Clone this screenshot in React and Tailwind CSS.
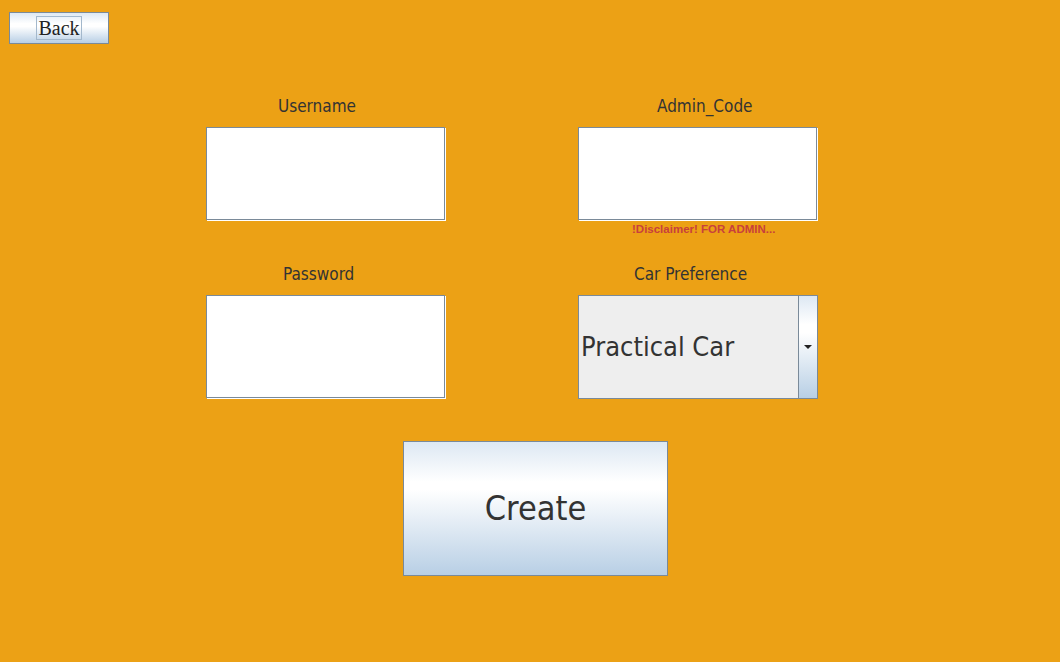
import React from 'react';

const fieldCls =
  'bg-white border border-[#7a8a99] shadow-[1px_1px_0_0_#ffffff] mr-[1px]';

const Label = ({ text, pad }) => (
  <div className={`h-[20px] leading-[20px] text-[17px] text-[#333333] ${pad}`}>{text}</div>
);

export default function App() {
  return (
    <div className="w-[1060px] h-[662px] bg-[#eca115] overflow-hidden" style={{ fontFamily: '"DejaVu Sans Condensed", "DejaVu Sans", sans-serif', fontStretch: 'condensed' }}>
      {/* Back */}
      <div className="pt-[12px] pl-[9px]">
        <button className="w-[100px] h-[32px] border border-[#7a8a99] bg-[linear-gradient(to_bottom,#dde8f3_0%,#ffffff_35%,#ffffff_45%,#b8cfe5_100%)] flex items-center justify-center">
          <span className="border border-[#a3b8cc] px-[1px] leading-[22px] text-[20px] text-[#222]" style={{ fontFamily: '"Liberation Serif", serif', fontStretch: 'normal' }}>
            Back
          </span>
        </button>
      </div>

      <div className="ml-[206px] mt-[52px] grid grid-cols-[240px_240px] gap-x-[132px]">
        {/* row 1 */}
        <div>
          <Label text="Username" pad="pl-[72px]" />
          <div className={`mt-[11px] h-[93px] ${fieldCls}`} />
          <div className="h-[19px]" />
        </div>
        <div>
          <Label text="Admin_Code" pad="pl-[79px]" />
          <div className={`mt-[11px] h-[93px] ${fieldCls}`} />
          <div className="h-[19px] leading-[18px] pl-[54px] text-[11.5px] font-bold text-[#c8403c]" style={{ fontFamily: '"Liberation Sans", Arial, sans-serif', fontStretch: 'normal' }}>
            !Disclaimer! FOR ADMIN...
          </div>
        </div>

        {/* row 2 */}
        <div className="mt-[25px]">
          <Label text="Password" pad="pl-[77px]" />
          <div className={`mt-[11px] h-[103px] ${fieldCls}`} />
        </div>
        <div className="mt-[25px]">
          <Label text="Car Preference" pad="pl-[56px]" />
          <div className="mt-[11px] h-[104px] border border-[#7a8a99] bg-[#eeeeee] flex">
            <div className="flex-1 flex items-center pl-[2px] text-[27px] text-[#333333]">Practical Car</div>
            <div className="w-[19px] border-l border-[#7a8a99] bg-[linear-gradient(to_bottom,#dde8f3_0%,#ffffff_28%,#ffffff_36%,#b8cfe5_100%)] flex items-center justify-center">
              <svg width="8" height="4" viewBox="0 0 8 4">
                <path d="M0 0 L8 0 L4 4 Z" fill="#222" />
              </svg>
            </div>
          </div>
        </div>
      </div>

      {/* Create */}
      <div className="ml-[403px] mt-[42px]">
        <button className="w-[265px] h-[135px] border border-[#7a8a99] bg-[linear-gradient(to_bottom,#dde8f3_0%,#ffffff_30%,#ffffff_36%,#b8cfe5_100%)] flex items-center justify-center text-[34px] text-[#333333]">
          Create
        </button>
      </div>
    </div>
  );
}
